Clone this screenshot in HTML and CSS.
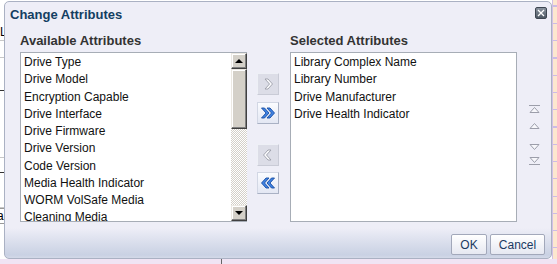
FILE: index.html
```html
<!DOCTYPE html>
<html lang="en">
<head>
    <meta charset="UTF-8">
    <title>Change Attributes</title>
    <link rel="stylesheet" href="styles.css">
</head>
<body>
    <div class="page">
        <!-- table rows peeking out behind the dialog -->
        <div class="behind-left">
            <div class="bl-row bl-r1"><span>L</span></div>
            <div class="bl-row bl-r2"></div>
            <div class="bl-row bl-r3 dark"></div>
            <div class="bl-row bl-r4"></div>
            <div class="bl-row bl-r5 dark"></div>
            <div class="bl-row bl-r6"></div>
            <div class="bl-box">a</div>
        </div>

        <div class="dialog">
            <div class="dlg-head">
                <div class="dlg-title">Change Attributes</div>
                <button class="dlg-close" title="Close">
                    <svg viewBox="0 0 10 10" width="10" height="10">
                        <path d="M2 2 L8 8 M8 2 L2 8" stroke="#fff" stroke-width="1.3" fill="none"/>
                    </svg>
                </button>
            </div>

            <div class="dlg-body">
                <div class="col">
                    <div class="col-label">Available Attributes</div>
                    <div class="listbox list-avail">
                        <ul class="items">
                            <li>Drive Type</li>
                            <li>Drive Model</li>
                            <li>Encryption Capable</li>
                            <li>Drive Interface</li>
                            <li>Drive Firmware</li>
                            <li>Drive Version</li>
                            <li>Code Version</li>
                            <li>Media Health Indicator</li>
                            <li>WORM VolSafe Media</li>
                            <li>Cleaning Media</li>
                            <li>Media Type</li>
                        </ul>
                        <div class="vscroll">
                            <div class="sb-btn"><span class="arr arr-up"></span></div>
                            <div class="sb-thumb"></div>
                            <div class="sb-track"></div>
                            <div class="sb-btn"><span class="arr arr-down"></span></div>
                        </div>
                    </div>
                </div>

                <div class="shuttle">
                    <div class="sh-btn off move-one">
                        <svg viewBox="0 0 16 16" width="16" height="16">
                            <path d="M5 3 L8 3 L12.5 8 L8 13 L5 13 L9.5 8 Z" fill="#fbfbfd" stroke="#9b9da8" stroke-width="0.9"/>
                        </svg>
                    </div>
                    <div class="sh-btn on move-all">
                        <svg viewBox="0 0 16 16" width="16" height="16">
                            <path d="M1.5 3 L4.5 3 L9 8 L4.5 13 L1.5 13 L6 8 Z" fill="#3f82e2" stroke="#1a4ea4" stroke-width="0.9"/>
                            <path d="M7 3 L10 3 L14.5 8 L10 13 L7 13 L11.5 8 Z" fill="#3f82e2" stroke="#1a4ea4" stroke-width="0.9"/>
                        </svg>
                    </div>
                    <div class="sh-btn off remove-one">
                        <svg viewBox="0 0 16 16" width="16" height="16">
                            <path d="M11 3 L8 3 L3.5 8 L8 13 L11 13 L6.5 8 Z" fill="#fbfbfd" stroke="#9b9da8" stroke-width="0.9"/>
                        </svg>
                    </div>
                    <div class="sh-btn on remove-all">
                        <svg viewBox="0 0 16 16" width="16" height="16">
                            <path d="M14.5 3 L11.5 3 L7 8 L11.5 13 L14.5 13 L10 8 Z" fill="#3f82e2" stroke="#1a4ea4" stroke-width="0.9"/>
                            <path d="M9 3 L6 3 L1.5 8 L6 13 L9 13 L4.5 8 Z" fill="#3f82e2" stroke="#1a4ea4" stroke-width="0.9"/>
                        </svg>
                    </div>
                </div>

                <div class="col col-sel">
                    <div class="col-label">Selected Attributes</div>
                    <div class="listbox list-sel">
                        <ul class="items">
                            <li>Library Complex Name</li>
                            <li>Library Number</li>
                            <li>Drive Manufacturer</li>
                            <li>Drive Health Indicator</li>
                        </ul>
                    </div>
                </div>

                <div class="reorder">
                    <svg class="ro ro-top" viewBox="0 0 11 8" width="11" height="8">
                        <path d="M0 0.5 H11" stroke="#9c9eaa"/>
                        <path d="M1 7.5 L5.5 2.5 L10 7.5 Z" fill="#f7f7fb" stroke="#9c9eaa"/>
                    </svg>
                    <svg class="ro ro-up" viewBox="0 0 11 6" width="11" height="6">
                        <path d="M1 5.5 L5.5 0.5 L10 5.5 Z" fill="#f7f7fb" stroke="#9c9eaa"/>
                    </svg>
                    <svg class="ro ro-down" viewBox="0 0 11 6" width="11" height="6">
                        <path d="M1 0.5 L5.5 5.5 L10 0.5 Z" fill="#f7f7fb" stroke="#9c9eaa"/>
                    </svg>
                    <svg class="ro ro-bottom" viewBox="0 0 11 8" width="11" height="8">
                        <path d="M1 0.5 L5.5 5.5 L10 0.5 Z" fill="#f7f7fb" stroke="#9c9eaa"/>
                        <path d="M0 7.5 H11" stroke="#9c9eaa"/>
                    </svg>
                </div>
            </div>

            <div class="dlg-foot">
                <button class="btn btn-ok">OK</button>
                <button class="btn btn-cancel">Cancel</button>
            </div>
        </div>

        <div class="behind-right"></div>
        <div class="behind-bottom"><div class="bb-line"></div></div>
    </div>
</body>
</html>
```

FILE: styles.css
```css
* {
    box-sizing: border-box;
    margin: 0;
    padding: 0;
}

body {
    font-family: 'Liberation Sans', Arial, sans-serif;
    background: #fff;
    width: 557px;
    height: 264px;
    overflow: hidden;
}

.page {
    display: grid;
    grid-template-columns: 4px 548px 5px;
    grid-template-rows: 259px 5px;
}

/* ---- stuff behind the dialog ---- */
.behind-left {
    background: #fff;
    overflow: hidden;
    display: flex;
    flex-direction: column;
    font-size: 12px;
    color: #000;
}

.bl-row {
    border-bottom: 1px solid #c8c8c8;
}

.bl-row.dark {
    border-bottom-color: #333;
}

.bl-r1 { height: 41px; padding-top: 26px; line-height: 12px; }
.bl-r2 { height: 17px; }
.bl-r3 { height: 33px; }
.bl-r4 { height: 67px; }
.bl-r5 { height: 15px; }
.bl-r6 { height: 35px; }

.bl-box {
    height: 16px;
    border-top: 1px solid #999;
    border-bottom: 1px solid #999;
    line-height: 14px;
    text-indent: -3px;
}

.behind-right {
    border-left: 1px solid #d2c0e6;
    background: repeating-linear-gradient(to bottom, #fde7cf 0, #fde7cf 16px, #cdbbe4 16px, #cdbbe4 17.25px);
    background-position: 0 7px;
}

.behind-bottom {
    grid-column: 1 / -1;
    background: #f0e4f4;
}

.bb-line {
    margin-left: 221px;
    width: 1px;
    height: 5px;
    background: #666;
}

/* ---- dialog ---- */
.dialog {
    margin-top: 1px;
    height: 258px;
    border: 1px solid #aab1c3;
    border-radius: 5px;
    background: linear-gradient(to bottom, #eeeef7 0, #eeeef7 226px, #dde1ee 238px, #c9d1e3 253px, #d3d9e8 256px);
    display: flex;
    flex-direction: column;
    overflow: hidden;
}

.dlg-head {
    height: 24px;
    display: flex;
    justify-content: space-between;
    align-items: flex-start;
}

.dlg-title {
    margin: 5px 0 0 5px;
    font-size: 13px;
    line-height: 16px;
    font-weight: 700;
    color: #133e62;
}

.dlg-close {
    margin: 5px 4px 0 0;
    width: 12px;
    height: 12px;
    border: 1px solid #3e4651;
    border-radius: 2px;
    background: linear-gradient(to bottom, #8a939e, #4e5864);
    display: flex;
    align-items: center;
    justify-content: center;
}

.dlg-body {
    height: 196px;
    display: flex;
    padding: 7px 0 0 15px;
}

.col-label {
    font-size: 13px;
    line-height: 16px;
    font-weight: 700;
    color: #333;
    margin-bottom: 3px;
}

.listbox {
    height: 170px;
    background: #fff;
    border: 1px solid #a7adb6;
    display: flex;
}

.list-avail { width: 227px; border-right: none; }
.list-sel { width: 227px; }

.items {
    flex: 1;
    list-style: none;
    overflow: hidden;
    padding: 1px 0 0 3px;
    font-size: 12px;
    line-height: 17.25px;
    color: #111;
    white-space: nowrap;
}

/* classic scrollbar */
.vscroll {
    width: 16px;
    display: flex;
    flex-direction: column;
    background: repeating-conic-gradient(#d4d0c8 0 25%, #fff 0 50%) 0 0 / 2px 2px;
}

.sb-btn,
.sb-thumb {
    background: #d4d0c8;
    border: 1px solid;
    border-color: #ece9e3 #404040 #404040 #ece9e3;
    box-shadow: inset -1px -1px #808080, inset 1px 1px #fff;
}

.sb-btn {
    height: 16px;
    display: flex;
    align-items: center;
    justify-content: center;
}

.sb-thumb { height: 60px; }
.sb-track { flex: 1; }

.arr {
    width: 0;
    height: 0;
    border-left: 4px solid transparent;
    border-right: 4px solid transparent;
}

.arr-up { border-bottom: 4px solid #000; }
.arr-down { border-top: 4px solid #000; }

/* shuttle buttons */
.shuttle {
    margin-left: 10px;
    padding-top: 40px;
    display: flex;
    flex-direction: column;
}

.sh-btn {
    width: 22px;
    height: 22px;
    border: 1px solid;
    display: flex;
    align-items: center;
    justify-content: center;
}

.sh-btn.off {
    background: #dcdde7;
    border-color: #eef0f6 #c9cbd6 #c9cbd6 #eef0f6;
}

.sh-btn.on {
    background: linear-gradient(to bottom, #fbfcff, #e3e7f3);
    border-color: #d2d7e4 #a9b1c4 #a9b1c4 #d2d7e4;
}

.move-all { margin-top: 7px; }
.remove-one { margin-top: 20px; }
.remove-all { margin-top: 6px; }

.col-sel { margin-left: 11px; }

.reorder {
    margin-left: 12px;
    padding-top: 72px;
    display: flex;
    flex-direction: column;
}

.ro { display: block; }
.ro-up { margin-top: 10px; }
.ro-down { margin-top: 15px; }
.ro-bottom { margin-top: 7px; }

/* footer */
.dlg-foot {
    flex: 1;
    display: flex;
    justify-content: flex-end;
    align-items: flex-start;
    gap: 3px;
    padding: 12px 6px 0 0;
}

.btn {
    height: 21px;
    border: 1px solid #a2a8ba;
    border-radius: 2px;
    background: linear-gradient(to bottom, #ffffff, #e6e8f1);
    font-family: 'Liberation Sans', Arial, sans-serif;
    font-size: 12px;
    color: #1b3a62;
}

.btn-ok { width: 36px; }
.btn-cancel { width: 55px; }
```
